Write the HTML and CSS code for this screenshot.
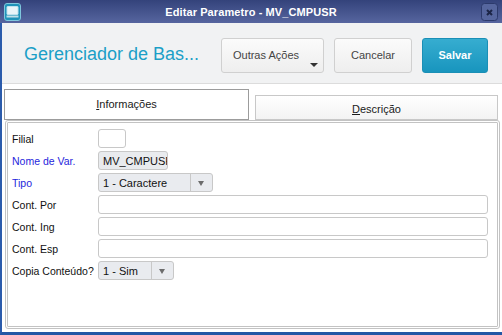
FILE: index.html
```html
<!DOCTYPE html>
<html>
<head>
<meta charset="utf-8">
<link rel="stylesheet" href="styles.css">
</head>
<body>
<div class="window">
  <div class="titlebar">
    <div class="app-icon">
      <svg width="17" height="18" viewBox="0 0 17 18">
        <rect x="0.5" y="0.5" width="16" height="17" rx="2.5" fill="#1f93b9" stroke="#7fc6dc"/>
        <rect x="3" y="3.5" width="11" height="8" rx="0.5" fill="#e9f4f8" stroke="#bfe2ee"/>
        <rect x="2.5" y="12.5" width="12" height="2" fill="#bfe0ea"/>
      </svg>
    </div>
    <div class="title">Editar Parametro - MV_CMPUSR</div>
    <div class="close">
      <svg width="17" height="18" viewBox="0 0 17 18">
        <rect x="0.5" y="0.5" width="16" height="17" rx="3" fill="#56669e" stroke="#2c3a6c"/>
        <path d="M6 7 L11 12 M11 7 L6 12" stroke="#1c2547" stroke-width="2"/>
      </svg>
    </div>
  </div>
  <div class="frame">
    <div class="header">
      <div class="page-title">Gerenciador de Bas...</div>
      <div class="actions">
        <button class="btn btn-more">Outras Ações<span class="caret"></span></button>
        <button class="btn btn-cancel">Cancelar</button>
        <button class="btn btn-save">Salvar</button>
      </div>
    </div>
    <div class="tabs">
      <div class="tab tab-active"><u>I</u>nformações</div>
      <div class="tab tab-inactive"><u>D</u>escrição</div>
    </div>
    <div class="panel">
      <div class="row">
        <label class="lbl">Filial</label>
        <div class="field f-filial"></div>
      </div>
      <div class="row">
        <label class="lbl lbl-blue">Nome de Var.</label>
        <div class="field f-nome readonly">MV_CMPUSR</div>
      </div>
      <div class="row">
        <label class="lbl lbl-blue">Tipo</label>
        <div class="select f-tipo"><span class="sel-text">1 - Caractere</span><span class="sel-arrow"></span></div>
      </div>
      <div class="row">
        <label class="lbl">Cont. Por</label>
        <div class="field f-wide"></div>
      </div>
      <div class="row">
        <label class="lbl">Cont. Ing</label>
        <div class="field f-wide"></div>
      </div>
      <div class="row">
        <label class="lbl">Cont. Esp</label>
        <div class="field f-wide"></div>
      </div>
      <div class="row">
        <label class="lbl">Copia Conteúdo?</label>
        <div class="select f-copia"><span class="sel-text">1 - Sim</span><span class="sel-arrow"></span></div>
      </div>
    </div>
  </div>
</div>
</body>
</html>
```
FILE: styles.css
```css
* { box-sizing: border-box; }
html, body { margin: 0; padding: 0; }
body {
  width: 502px;
  height: 335px;
  overflow: hidden;
  font-family: "Liberation Sans", Arial, sans-serif;
  background: #ffffff;
}
.window {
  width: 502px;
  height: 335px;
  display: flex;
  flex-direction: column;
}
.titlebar {
  height: 23px;
  background: linear-gradient(#34437b, #56659f);
  display: grid;
  grid-template-columns: 1fr auto 1fr;
  align-items: center;
  padding: 0 4px;
}
.app-icon { display: flex; }
.app-icon svg, .close svg { display: block; }
.title {
  color: #ffffff;
  font-weight: bold;
  font-size: 11px;
  letter-spacing: 0.1px;
}
.close { justify-self: end; display: flex; }
.frame {
  flex: 1;
  display: flex;
  flex-direction: column;
  border-left: 2px solid #2b5bab;
  border-bottom: 3px solid #2357a5;
  min-height: 0;
}
.header {
  height: 61px;
  background: #f1f2f3;
  border-bottom: 1px solid #dcdcdc;
  display: flex;
  align-items: center;
  padding: 4px 14px 0 22px;
}
.page-title {
  color: #1b9fc7;
  font-size: 18px;
  padding-bottom: 2px;
}
.actions {
  margin-left: auto;
  display: flex;
  gap: 10px;
}
.btn {
  position: relative;
  height: 35px;
  border: 1px solid #d0d0d0;
  border-radius: 3px;
  background: linear-gradient(#fbfbfb, #eeeeee);
  font-family: "Liberation Sans", Arial, sans-serif;
  font-size: 11px;
  color: #444444;
  padding: 0;
}
.btn-more { width: 103px; padding-right: 13px; }
.btn-cancel { width: 78px; }
.btn-save {
  width: 66px;
  background: linear-gradient(#36add0, #1895be);
  border-color: #1a8fb6;
  color: #ffffff;
  font-weight: bold;
}
.caret {
  position: absolute;
  right: 5px;
  bottom: 5px;
  width: 0;
  height: 0;
  border-left: 4px solid transparent;
  border-right: 4px solid transparent;
  border-top: 4px solid #333333;
}
.tabs {
  display: flex;
  align-items: flex-end;
  gap: 6px;
  padding: 4px 2px 0 2px;
  height: 36px;
}
.tab {
  font-size: 11px;
  color: #1a1a1a;
  display: flex;
  align-items: center;
  justify-content: center;
}
.tab-active {
  width: 245px;
  height: 31px;
  border: 1px solid #9c9c9c;
  background: #ffffff;
  padding-bottom: 1px;
}
.tab-inactive {
  width: 243px;
  height: 25px;
  border: 1px solid #c8c8c8;
  background: linear-gradient(#ffffff, #f3f3f3);
  padding-top: 2px;
}
.panel {
  flex: 1;
  margin: 0 2px 3px 3px;
  border: 3px double #c3c3c3;
  border-radius: 3px;
  padding: 6px 9px 0 4px;
  display: flex;
  flex-direction: column;
  gap: 3px;
}
.row {
  display: flex;
  align-items: center;
  height: 19px;
}
.lbl {
  width: 86px;
  font-size: 10.5px;
  color: #111111;
}
.lbl-blue { color: #2626dc; }
.field {
  height: 19px;
  border: 1px solid #c8c8c8;
  border-radius: 3px;
  background: #ffffff;
  font-size: 11px;
  color: #111;
  padding-left: 4px;
  display: flex;
  align-items: center;
  overflow: hidden;
  white-space: nowrap;
}
.readonly { background: #e9ebee; }
.f-filial { width: 28px; }
.f-nome { width: 70px; }
.f-wide { flex: 1; }
.select {
  height: 19px;
  border: 1px solid #c8c8c8;
  border-radius: 3px;
  background: #e9ebef;
  display: flex;
  align-items: stretch;
  font-size: 11px;
  color: #111;
}
.f-tipo { width: 115px; }
.f-copia { width: 76px; }
.sel-text {
  flex: 1;
  padding-left: 4px;
  display: flex;
  align-items: center;
}
.sel-arrow {
  width: 22px;
  border-left: 1px solid #c8c8c8;
  position: relative;
}
.sel-arrow::after {
  content: "";
  position: absolute;
  left: 7px;
  top: 7px;
  border-left: 3.5px solid transparent;
  border-right: 3.5px solid transparent;
  border-top: 5px solid #6c6c6c;
}
```
